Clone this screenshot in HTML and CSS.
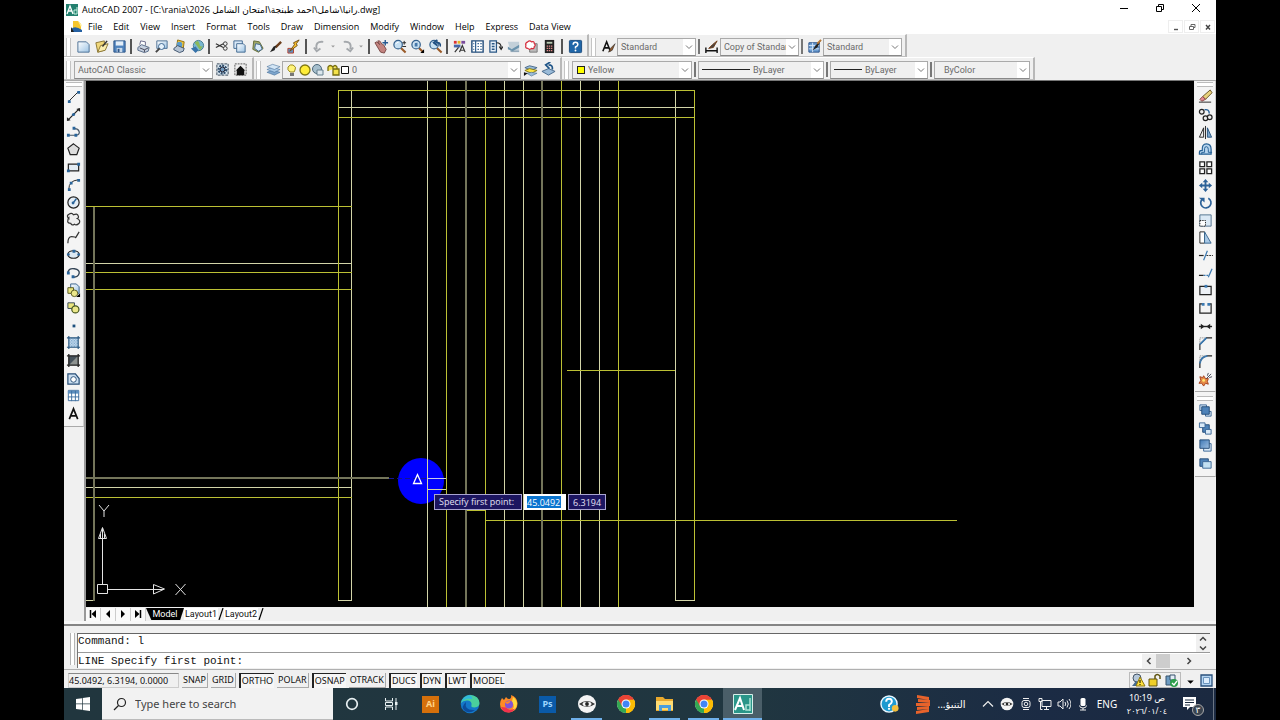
FILE: index.html
```html
<!DOCTYPE html>
<html lang="en">
<head>
<meta charset="utf-8">
<title>AutoCAD 2007</title>
<link rel="stylesheet" href="styles.css">
</head>
<body>
<svg class="sprite" aria-hidden="true">
  <defs>
    <linearGradient id="sheet" x1="0" y1="0" x2="1" y2="1"><stop offset="0" stop-color="#fff"/><stop offset="1" stop-color="#9cc3e4"/></linearGradient>
    <linearGradient id="steel" x1="0" y1="0" x2="1" y2="1"><stop offset="0" stop-color="#3f78b5"/><stop offset="1" stop-color="#9fc0e2"/></linearGradient>
    <pattern id="hatch" width="3" height="3" patternUnits="userSpaceOnUse"><path d="M0 0l3 3M3 0L0 3" stroke="#4d86b8" stroke-width=".6"/></pattern>
    <symbol id="chev" viewBox="0 0 10 10"><path d="M2 3.500l3 3 3-3" fill="none" stroke="#777"/></symbol>
    <symbol id="lens" viewBox="0 0 16 16"><path d="M9.500 9.500l5 5" stroke="#9a5a28" stroke-width="2.200"/><circle cx="6.500" cy="6" r="4.500" fill="#c5dff2" stroke="#35618e" stroke-width="1.300"/><path d="M4 5.500a3 3 0 0 1 3-2" stroke="#fff" fill="none"/></symbol>
    <symbol id="layers" viewBox="0 0 16 16"><path d="M1 11l6-2.500 8 2.500-6 3z" fill="#7ea6cd" stroke="#456e99" stroke-width=".6"/><path d="M1 8l6-2.500L15 8l-6 3z" fill="#a9c9e6" stroke="#456e99" stroke-width=".6"/><path d="M1 5l6-2.500L15 5 9 8z" fill="#d4e6f5" stroke="#456e99" stroke-width=".6"/></symbol>
    <symbol id="chrome" viewBox="0 0 20 20"><circle cx="10" cy="10" r="9" fill="#fff"/><path d="M10 10L2.200 5.500A9 9 0 0 1 17.800 5.500z" fill="#e94335"/><path d="M10 10l7.800-4.500A9 9 0 0 1 10 19z" fill="#fbbc04"/><path d="M10 10v9A9 9 0 0 1 2.200 5.500z" fill="#34a853"/><path d="M10 5.500h7.800A9 9 0 0 1 10 19l4-6.500z" fill="#fbbc04"/><path d="M10 5.500h7.800A9 9 0 0 0 2.200 5.500L6 12z" fill="#e94335"/><circle cx="10" cy="10" r="4.500" fill="#fff"/><circle cx="10" cy="10" r="3.500" fill="#4285f4"/></symbol>
    <symbol id="eye" viewBox="0 0 20 20"><circle cx="10" cy="10" r="9" fill="#f4f4f4"/><path d="M2 10Q10 4 18 10 10 16 2 10z" fill="#333"/><ellipse cx="10" cy="10" rx="4.500" ry="2.300" fill="#f4f4f4"/><circle cx="10" cy="10" r="1.900" fill="#222"/></symbol>
  </defs>
</svg>

<div class="app">
  <header class="titlebar">
    <svg class="logo" viewBox="0 0 12 12"><path d="M0 0h12v12H0z" fill="#23806f"/><path d="M1 10L4 2l3 8M2 7h4" fill="none" stroke="#fff" stroke-width="1.300"/><path d="M11 6H8v4h3M11 3v7" fill="none" stroke="#c6f0df"/></svg>
    <h1 class="title">AutoCAD 2007 - [C:\rania\<span class="path">رانيا\شامل\احمد طبنجة\امتحان الشامل 2026</span>.dwg]</h1>
    <div class="winbtns">
      <button aria-label="Minimize"><svg viewBox="0 0 10 10"><path d="M1 5.500h8" stroke="#000"/></svg></button>
      <button aria-label="Restore"><svg viewBox="0 0 10 10"><path d="M1.500 3.500h5v5h-5zM3.500 3.500v-2h5v5h-2" fill="none" stroke="#000"/></svg></button>
      <button aria-label="Close"><svg viewBox="0 0 10 10"><path d="M1 1l8 8M9 1L1 9" stroke="#000"/></svg></button>
    </div>
  </header>

  <nav class="menubar">
    <svg class="docicon" viewBox="0 0 13 13"><path d="M3 1h5l3 3v7H3z" fill="#f6c62e"/><path d="M8 1l4 4-1 2z" fill="#fff1a8"/><path d="M1 9q4-4 11 1v2H1z" fill="#2561a3"/><path d="M1 12V7l3 5z" fill="#222"/></svg>
    <button>File</button><button>Edit</button><button>View</button><button>Insert</button><button>Format</button><button>Tools</button><button>Draw</button><button>Dimension</button><button>Modify</button><button>Window</button><button>Help</button><button>Express</button><button>Data View</button>
    <div class="docbtns">
      <button aria-label="Minimize drawing"><svg viewBox="0 0 8 8"><path d="M2 6.500h4" stroke="#555" stroke-width="1.400"/></svg></button>
      <button aria-label="Restore drawing"><svg viewBox="0 0 8 8"><path d="M1.500 3.500h4v3h-4zM3 3V1.500h4v3H6" fill="none" stroke="#666"/></svg></button>
      <button aria-label="Close drawing"><svg viewBox="0 0 8 8"><path d="M2 2l4 4.500M6 2L2 6.500" stroke="#444" stroke-width="1.400"/></svg></button>
    </div>
  </nav>

  <div class="toolrow">
    <div class="toolbar">
      <i class="grip"></i>
      <button aria-label="New"><svg viewBox="0 0 16 16"><path d="M2 3h9l3 3v8H2z" fill="url(#sheet)" stroke="#4b6f94"/></svg></button>
      <button aria-label="Open"><svg viewBox="0 0 16 16"><path d="M2 4l9-2v10l-7 2z" fill="#f0d77a" stroke="#8a7430"/><path d="M4 14l3-7 8-2-3 7z" fill="#fbeeb0" stroke="#8a7430"/><path d="M9 8l5-6" stroke="#333" stroke-width="1.500"/></svg></button>
      <button aria-label="Save"><svg viewBox="0 0 16 16"><path d="M2 2h12v12H2z" fill="#4f83bd" stroke="#2d5486"/><path d="M4 2.500h8V7H4z" fill="#e4eef8"/><path d="M5 9.500h6V14H5z" fill="#c9d9ea"/><path d="M6 10.500h2V14H6z" fill="#2d5486"/></svg></button>
      <i class="sep"></i>
      <button aria-label="Plot"><svg viewBox="0 0 16 16"><path d="M4 6l1-4 5 1 0 4" fill="#fff" stroke="#668"/><path d="M2 9l4-3 8 3-1 4-4 1.500L2 12z" fill="#c6d0df" stroke="#566b88"/><path d="M4 9.500l5 2 4-2M9 11.500V14" fill="none" stroke="#445"/></svg></button>
      <button aria-label="Plot preview"><svg viewBox="0 0 16 16"><path d="M3 2h11v8H3z" fill="url(#sheet)" stroke="#4b6f94"/><circle cx="8" cy="8" r="3.200" fill="#e5f2fc" stroke="#35618e"/><path d="M6 10l-4 4" stroke="#444" stroke-width="2"/></svg></button>
      <button aria-label="Publish"><svg viewBox="0 0 16 16"><path d="M6 1l7 2-1 7-7-2z" fill="#f2c533" stroke="#916f12"/><circle cx="8" cy="6" r="3" fill="#5b9bcd"/><path d="M2 10l4-3 7 3-1 3-4 1.500-6-3z" fill="#b6c4d4" stroke="#3c516c"/></svg></button>
      <button aria-label="3D DWF"><svg viewBox="0 0 16 16"><circle cx="9" cy="7" r="5.500" fill="#78b7d0" stroke="#437a91"/><path d="M5 4q4-4 5 1t4 2l-3 5z" fill="#8cb95b"/><path d="M1 10l5-2 3 4-3 3z" fill="#3873aa"/></svg></button>
      <i class="sep"></i>
      <button aria-label="Cut"><svg viewBox="0 0 16 16"><path d="M2 5l8 4M2 9l8-4" stroke="#333" stroke-width="1.300"/><circle cx="12" cy="5" r="2" fill="none" stroke="#333"/><circle cx="12" cy="10" r="2" fill="none" stroke="#333"/></svg></button>
      <button aria-label="Copy"><svg viewBox="0 0 16 16"><path d="M2 2h9v8H2z" fill="#d8e8f7" stroke="#3f6790"/><path d="M5 5h7l2 2v7H5z" fill="url(#sheet)" stroke="#3f6790"/></svg></button>
      <button aria-label="Paste"><svg viewBox="0 0 16 16"><path d="M4 2l6 1 4 7-5 4-6-3z" fill="#a0a867" stroke="#626b36"/><path d="M6 5l5 1 2 5-4 2-4-3z" fill="#d9ebfa" stroke="#436b94"/></svg></button>
      <button aria-label="Match properties"><svg viewBox="0 0 16 16"><path d="M14 3L8 9" stroke="#6b3d1b" stroke-width="2.500"/><path d="M9 7L7 12l-5 2 4-6z" fill="#222"/></svg></button>
      <button aria-label="Block editor"><svg viewBox="0 0 16 16"><path d="M2 10h6v5H2z" fill="#638fc0" stroke="#b4402b"/><path d="M14 1L8 4l1 2-5 7 8-6-1-2z" fill="#ffc52d" stroke="#6c4910"/></svg></button>
      <i class="sep wide"></i>
      <button aria-label="Undo"><svg viewBox="0 0 16 16"><path d="M12 3Q3 2 5 11M2 9l3 4 4-3" fill="none" stroke="#a4a8ac" stroke-width="2"/></svg></button>
      <button class="drop" aria-label="Undo list"><svg viewBox="0 0 10 16"><path d="M3 7h4L5 9z" fill="#999"/></svg></button>
      <button aria-label="Redo"><svg viewBox="0 0 16 16"><path d="M4 3q9-1 7 8M7 10l4 3 3-4" fill="none" stroke="#a4a8ac" stroke-width="2"/></svg></button>
      <button class="drop" aria-label="Redo list"><svg viewBox="0 0 10 16"><path d="M3 7h4L5 9z" fill="#999"/></svg></button>
      <i class="sep"></i>
      <button aria-label="Pan"><svg viewBox="0 0 16 16"><path d="M1 4l2-1 3 3-2-4 2 0 3 4 1 0 3 5-2 4-4-1z" fill="#c3837f" stroke="#7a4946"/><path d="M12 1v6M9 4h6" stroke="#285a91" stroke-width="1.500"/></svg></button>
      <button aria-label="Zoom realtime"><svg viewBox="0 0 16 16"><use href="#lens"/><path d="M11 4h4M13 2v4M11 8h4" stroke="#222"/></svg></button>
      <button aria-label="Zoom window"><svg viewBox="0 0 16 16"><use href="#lens"/><path d="M5 4h3v4H5z" fill="#4577aa"/><path d="M15 11v4h-4z" fill="#000"/></svg></button>
      <button aria-label="Zoom previous"><svg viewBox="0 0 16 16"><use href="#lens"/><path d="M13 8q1-5-5-4M10 1L6 4l4 3" fill="none" stroke="#204f82" stroke-width="1.800"/></svg></button>
      <i class="sep"></i>
      <button aria-label="Properties"><svg viewBox="0 0 16 16"><path d="M2 2h3v3H2z" fill="#d33"/><path d="M6 2h3v3H6z" fill="#e6b422"/><path d="M10 2h4v3h-4z" fill="#7a4b9b"/><path d="M2 6h7v3H2z" fill="#46a"/><path d="M3 14l4-5M8 14l3-7 3 7M9 12h4" fill="none" stroke="#333" stroke-width="1.300"/></svg></button>
      <button aria-label="DesignCenter"><svg viewBox="0 0 16 16"><path d="M2 2h12v12H2z" fill="#fff" stroke="#244e7b" stroke-width="1.500"/><path d="M6 2v12M8 5h1.500M11 5h1.500M8 8h1.500M11 8h1.500M8 11h1.500M11 11h1.500M3.500 5h1M3.500 8h1M3.500 11h1" stroke="#33618f" stroke-width="1.300"/></svg></button>
      <button aria-label="Tool palettes"><svg viewBox="0 0 16 16"><path d="M2 2h7v12H2z" fill="#e7f0f9" stroke="#2a5785" stroke-width="1.300"/><path d="M4 5h3M4 8h3M4 11h3" stroke="#2a5785" stroke-width="1.500"/><path d="M9 4q5 0 5 5M12 8l2 3 2-3" fill="none" stroke="#222" stroke-width="1.300"/></svg></button>
      <button aria-label="Sheet set"><svg viewBox="0 0 16 16"><path d="M2 3h12v11H5z" fill="#c3d0d9"/><path d="M2 8l4 3 8-5v3l-7 4-5-2z" fill="#6b93ad"/><path d="M5 13h9" stroke="#7a93a5"/></svg></button>
      <button aria-label="Markup"><svg viewBox="0 0 16 16"><path d="M6 5h8v9H6z" fill="#bbb" stroke="#777"/><path d="M4 3q2-2 4 0 3-1 3 2 2 2 0 3 0 3-3 2-2 2-4 0-3 0-2-3-1-3 2-4z" fill="#fff" stroke="#d62d3c" stroke-width="1.300"/></svg></button>
      <button aria-label="Calculator"><svg viewBox="0 0 16 16"><path d="M3 1h10v14H3z" fill="#222"/><path d="M5 3h6v2H5z" fill="#b9cab3"/><path d="M5 7.500h6M5 10h6M5 12.500h6" stroke="#d88" stroke-width="1.300" stroke-dasharray="1.500 .8"/></svg></button>
      <i class="sep wide"></i>
      <button aria-label="Help"><svg viewBox="0 0 16 16"><rect x="1.500" y="1.500" width="13" height="13" rx="1" fill="#1f66a8" stroke="#174a7d"/><path d="M5.500 6q0-2.500 2.500-2.500T10.500 6q0 1.300-2.500 2.500v1.500" fill="none" stroke="#fff" stroke-width="1.600"/><circle cx="8" cy="12.200" r="1" fill="#fff"/></svg></button>
    </div>
    <div class="toolbar">
      <i class="grip"></i>
      <button aria-label="Text style"><svg viewBox="0 0 16 16"><path d="M2 13L6 3l4 10M3.500 9.500h5" fill="none" stroke="#111" stroke-width="1.700"/><path d="M15 5l-5 5-2 4 4-2z" fill="#8d572c" stroke="#222" stroke-width=".6"/></svg></button>
      <label class="combo w79"><select aria-label="Text style"><option>Standard</option></select><svg><use href="#chev"/></svg></label>
      <i class="sep thin"></i>
      <button aria-label="Dimension style"><svg viewBox="0 0 16 16"><path d="M2 9v6M14 9v6M2 12.500h12" stroke="#111" stroke-width="1.500"/><path d="M14 2L9 6 5 10l5-1z" fill="#444" stroke="#733d17"/></svg></button>
      <label class="combo w79"><select aria-label="Dimension style"><option>Copy of Standar</option></select><svg><use href="#chev"/></svg></label>
      <i class="sep thin"></i>
      <button aria-label="Table style"><svg viewBox="0 0 16 16"><path d="M2 4h11v10H2z" fill="#6d9ed2" stroke="#244e88"/><path d="M2 7h11M2 10.500h11M6 4v10" stroke="#d7e8fa"/><path d="M15 1L9 7l-3 5 5-3z" fill="#222"/><path d="M15 1l-4 4" stroke="#b87835" stroke-width="2"/></svg></button>
      <label class="combo w79"><select aria-label="Table style"><option>Standard</option></select><svg><use href="#chev"/></svg></label>
    </div>
  </div>

  <div class="toolrow">
    <div class="toolbar">
      <i class="grip"></i>
      <label class="combo w139"><select aria-label="Workspace"><option>AutoCAD Classic</option></select><svg><use href="#chev"/></svg></label>
      <button aria-label="Workspace settings"><svg viewBox="0 0 16 16"><path d="M2 2h12v12H2z" fill="#dce8f2" stroke="#345" stroke-dasharray="3 1"/><circle cx="8" cy="8" r="4" fill="none" stroke="#2c4b6a" stroke-width="2.500" stroke-dasharray="2 1"/><circle cx="8" cy="8" r="2.500" fill="#7199bd" stroke="#223"/></svg></button>
      <button aria-label="My workspace"><svg viewBox="0 0 16 16"><path d="M2 2h12v12H2z" fill="#eee" stroke="#555" stroke-dasharray="2 1"/><path d="M3 9l5-5 5 5h-1v5H4V9z" fill="#111"/></svg></button>
    </div>
    <div class="toolbar">
      <i class="grip"></i>
      <button aria-label="Layer manager"><svg><use href="#layers"/></svg></button>
      <label class="combo w239">
        <svg class="strip" viewBox="0 0 64 14"><path d="M5 9Q2 7 3 4q2-3 5-2 4 2 2 5L9 9z" fill="#fff47a" stroke="#9b8a20"/><path d="M5 10h4v3H5z" fill="#777"/><circle cx="20" cy="7" r="5" fill="#ffed38" stroke="#807814" stroke-width="1.300"/><circle cx="32" cy="6" r="4.500" fill="#a6bfcd" stroke="#4c687a"/><path d="M32 7h6v5h-6z" fill="#dce7ee" stroke="#67808f"/><path d="M43 8V4q2-3 5 0v2M48 12V6h6v6zM52 6V4q-2-3-4 0" fill="#f4e24b" stroke="#776d10" stroke-width="1.300"/><path d="M56.500 3.500h7v7h-7z" fill="#fff" stroke="#111"/></svg>
        <select aria-label="Layer"><option>0</option></select><svg><use href="#chev"/></svg></label>
      <button aria-label="Make layer current"><svg viewBox="0 0 16 16"><path d="M2 6l5-2 8 2-6 3z" fill="#9abbd8" stroke="#46698b"/><path d="M2 9l5-2 8 2-6 3z" fill="#ffe642" stroke="#807515"/><path d="M4 12l5-1 6 1-6 3z" fill="#9abbd8" stroke="#46698b" stroke-width=".6"/><path d="M1 15v-4l4 1z" fill="#111"/></svg></button>
      <button aria-label="Layer previous"><svg viewBox="0 0 16 16"><path d="M1 10l7-3 7 3-7 4z" fill="#9abbd8" stroke="#46698b"/><path d="M12 8q1-5-4-5M10 0L5 3l4 4" fill="none" stroke="#1e5487" stroke-width="1.800"/></svg></button>
    </div>
    <div class="toolbar">
      <i class="grip"></i>
      <label class="combo w120"><i class="swatch"></i><select aria-label="Color"><option>Yellow</option></select><svg><use href="#chev"/></svg></label>
      <i class="sep thin"></i>
      <label class="combo w126"><i class="line l48"></i><select aria-label="Linetype"><option>ByLayer</option></select><svg><use href="#chev"/></svg></label>
      <i class="sep thin"></i>
      <label class="combo w98"><i class="line l28"></i><select aria-label="Lineweight"><option>ByLayer</option></select><svg><use href="#chev"/></svg></label>
      <i class="sep thin"></i>
      <label class="combo w96 inset"><select aria-label="Plot style"><option>ByColor</option></select><svg><use href="#chev"/></svg></label>
    </div>
  </div>

  <main class="work">
    <aside class="side">
      <div class="vbar draw">
        <i class="hgrip"></i>
        <button aria-label="Line"><svg viewBox="0 0 16 16"><path d="M3 13L13 3" stroke="#222"/><path d="M2 12h3v3H2zM12 2h3v3h-3z" fill="#2a659b"/></svg></button>
        <button aria-label="Construction line"><svg viewBox="0 0 16 16"><path d="M2 14L14 2" stroke="#222" stroke-width="1.300"/><path d="M1 15v-4l4 3zM15 1v4l-4-3z" fill="#222"/><circle cx="8" cy="8" r="1.700" fill="#2a659b"/></svg></button>
        <button aria-label="Polyline"><svg viewBox="0 0 16 16"><path d="M2 12h9q4-1 3-4t-5-3" fill="none" stroke="#456" stroke-width="1.300"/><path d="M1 10.500h3v3H1zM9 10.500h3v3H9zM7 3h3v3H7z" fill="#2a659b"/></svg></button>
        <button aria-label="Polygon"><svg viewBox="0 0 16 16"><path d="M8 2l6 4.500-2.500 7h-7L2 6.500z" fill="#ddd" stroke="#222" stroke-width="1.300"/></svg></button>
        <button aria-label="Rectangle"><svg viewBox="0 0 16 16"><path d="M2.500 4.500h11v7h-11z" fill="#e4edf5" stroke="#222" stroke-width="1.300"/><path d="M1 10h3v3H1zM12 3h3v3h-3z" fill="#2a659b"/></svg></button>
        <button aria-label="Arc"><svg viewBox="0 0 16 16"><path d="M3 13Q3 4 13 3" fill="none" stroke="#222"/><path d="M2 12h3v3H2zM12 2h3v3h-3zM4 5h3v3H4z" fill="#2a659b"/></svg></button>
        <button aria-label="Circle"><svg viewBox="0 0 16 16"><circle cx="8" cy="8" r="6" fill="#e4edf5" stroke="#222" stroke-width="1.300"/><path d="M8 8l3-4" stroke="#2a659b" stroke-width="1.500"/><circle cx="7.500" cy="8.500" r="1.500" fill="#2a659b"/></svg></button>
        <button aria-label="Revision cloud"><svg viewBox="0 0 16 16"><path d="M3 7Q0 4 3 2.500 6 0 8 3q4-2 5 1 1 2-1 3 4 2 2 5-3 3-5 1-3 2-4-1-4 0-3-3 0-2 1-3z" fill="#eee" stroke="#333" stroke-width="1.300"/></svg></button>
        <button aria-label="Spline"><svg viewBox="0 0 16 16"><path d="M2 14q0-7 4-7t4 1 4-6" fill="none" stroke="#333" stroke-width="1.300"/></svg></button>
        <button aria-label="Ellipse"><svg viewBox="0 0 16 16"><ellipse cx="8" cy="8" rx="6" ry="4" fill="#dce8f2" stroke="#222" stroke-width="1.300"/><path d="M7 3h3v3H7zM1 7h3v2H1zM12 7h3v2h-3z" fill="#2a659b"/></svg></button>
        <button aria-label="Ellipse arc"><svg viewBox="0 0 16 16"><path d="M2 8q1-5 7-4t5 5-6 4" fill="none" stroke="#345" stroke-width="1.500"/><path d="M1 7h3v3H1zM6 11h3v3H6z" fill="#2a659b"/></svg></button>
        <button aria-label="Insert block"><svg viewBox="0 0 16 16"><path d="M5 1h6l3 3v7H5z" fill="url(#sheet)" stroke="#345f89"/><path d="M2 5h6v6H2z" fill="#e9e47d" stroke="#56571f"/><circle cx="9" cy="11" r="3.500" fill="#ece88a" stroke="#56571f"/><path d="M15 11v4h-4z"/></svg></button>
        <button aria-label="Make block"><svg viewBox="0 0 16 16"><path d="M2 3h7v6H2z" fill="#e9e47d" stroke="#345"/><circle cx="10" cy="10" r="3.800" fill="#ece88a" stroke="#44551f" stroke-width="1.300"/></svg></button>
        <button aria-label="Point"><svg viewBox="0 0 16 16"><path d="M7 7h3v3H7z" fill="#1e507e"/></svg></button>
        <button aria-label="Hatch"><svg viewBox="0 0 16 16"><path d="M3 3h10v10H3z" fill="#dcebf8"/><path d="M3 3h10v10H3z" fill="url(#hatch)"/><path d="M1 3h14M1 13h14M3 1v14M13 1v14" stroke="#27557f" stroke-width="1.200"/></svg></button>
        <button aria-label="Gradient"><svg viewBox="0 0 16 16"><path d="M3 3h10v10H3z" fill="#46525c"/><path d="M13 3v10H3z" fill="#8d9290"/><path d="M1 3h14M1 13h14M3 1v14M13 1v14" stroke="#222" stroke-width="1.400"/></svg></button>
        <button aria-label="Region"><svg viewBox="0 0 16 16"><path d="M2 3h8l4 5v6H2z" fill="#cbdff1" stroke="#284f77" stroke-width="1.300"/><circle cx="8" cy="9" r="3" fill="#fff" stroke="#284f77"/></svg></button>
        <button aria-label="Table"><svg viewBox="0 0 16 16"><path d="M2.500 2.500h11v11h-11z" fill="#fff" stroke="#3e6fa0"/><path d="M2 3h12v3H2z" fill="#5d8fbf"/><path d="M2 9.500h12M6 3v11M10 3v11" stroke="#3e6fa0"/></svg></button>
        <button aria-label="Multiline text"><svg viewBox="0 0 16 16"><path d="M3.500 14L8 3l4.500 11M5 10.500h6" fill="none" stroke="#111" stroke-width="1.800"/></svg></button>
      </div>
    </aside>

    <section class="drawing">
      <div class="canvas">
        <svg class="plan" aria-label="Drawing">
          <g transform="translate(-86 -81)" shape-rendering="crispEdges" fill="none">
            <circle cx="421" cy="481" r="23" fill="#00f" shape-rendering="auto"/>
            <g stroke="#d2d4a8">
              <path d="M427.500 81v526M504.500 81v526M523.500 81v526M580.500 81v526M599.500 81v526"/>
              <path d="M351.500 91v509M675.500 91v509M338 107.500h357M86 263.500h266M86 487.500h266M427 489.500h19M338 600.500h14M675 600.500h20M86 600.500h8"/>
            </g>
            <path d="M427 478.500h19" stroke="#c9cbe6"/>
            <g stroke="#bcc034">
              <path d="M446.500 81v526M485.500 81v526M561.500 81v526M618.500 81v526"/>
              <path d="M338.500 90v510M694.500 90v510M338 90.500h357M338 117.500h357M86 206.500h266M86 272.500h266M86 289.500h266M86 497.500h266M567 370.500h108M485 520.500h472M466 510.500h19"/>
            </g>
            <g stroke="#74755a" stroke-width="2"><path d="M466 81v526M542 81v526M94 207v394M86 478h303"/></g>
            <path d="M389 478.500h38" stroke="#141490" stroke-dasharray="5 3"/>
            <path d="M417.500 474.500l-4 9h8z" stroke="#fff" stroke-width="1.300" shape-rendering="auto"/>
            <g stroke="#e4e4e4" shape-rendering="auto"><path d="M97.500 584.500h10v9h-10zM102.500 584v-45M107 589.500h46M98.500 538.500l4-11 4 11zM100.500 538v-4M102.500 538v-10M104.500 538v-4M153.500 584.500l11 4.500-11 5zM153 589.500h10"/><path d="M99 505l5 6 5-6M104 511v6M175.500 584l10 11M185.500 584l-10 11"/></g>
          </g>
        </svg>
        <div class="dyn">
          <label class="tip" for="px">Specify first point:</label>
          <input id="px" class="px" value="45.0492">
          <input class="py" aria-label="Y coordinate" value="6.3194">
        </div>
      </div>
      <div class="tabs">
        <button class="nav" aria-label="First"><svg viewBox="0 0 14 12"><path d="M4.500 2v8" stroke="#000" stroke-width="1.500"/><path d="M10 2v8L5.500 6z"/></svg></button>
        <button class="nav" aria-label="Previous"><svg viewBox="0 0 14 12"><path d="M9 2v8L5 6z"/></svg></button>
        <button class="nav" aria-label="Next"><svg viewBox="0 0 14 12"><path d="M5 2v8l4-4z"/></svg></button>
        <button class="nav" aria-label="Last"><svg viewBox="0 0 14 12"><path d="M9.500 2v8" stroke="#000" stroke-width="1.500"/><path d="M4 2v8l4.500-4z"/></svg></button>
        <button class="tab active">Model</button>
        <button class="tab">Layout1</button>
        <svg class="slash" viewBox="0 0 6 12"><path d="M1 12L5 0" stroke="#000" stroke-width="1.200"/></svg>
        <button class="tab">Layout2</button>
        <svg class="slash" viewBox="0 0 6 12"><path d="M1 12L5 0" stroke="#000" stroke-width="1.200"/></svg>
      </div>
    </section>

    <aside class="side right">
      <div class="vbar modify">
        <i class="hgrip"></i>
        <button aria-label="Erase"><svg viewBox="0 0 16 16"><path d="M13 1L5 8l3 3 7-7z" fill="#e9d27c" stroke="#665322"/><path d="M5 8l-3 3 2 2 4-2z" fill="#e58c92" stroke="#844"/><path d="M1 14h13" stroke="#222"/></svg></button>
        <button aria-label="Copy object"><svg viewBox="0 0 16 16"><g fill="#eee" stroke="#222" stroke-width="1.300"><circle cx="4" cy="5" r="2.500"/><circle cx="8" cy="12" r="2.500"/><circle cx="12.500" cy="11" r="2.500"/></g><path d="M7 3q5-1 5 4" fill="none" stroke="#27629a" stroke-width="1.500"/></svg></button>
        <button aria-label="Mirror"><svg viewBox="0 0 16 16"><path d="M6 3v10H1.500z" fill="#eee" stroke="#222"/><path d="M10 3v10h4.500z" fill="#7ba6cd" stroke="#25537f"/><path d="M8 1v14" stroke="#222"/></svg></button>
        <button aria-label="Offset"><svg viewBox="0 0 16 16"><path d="M1.500 13v-2q0-2 3-2Q4 2 9 2t5 6v5z" fill="#b7d5ee" stroke="#225e93" stroke-width="1.300"/><path d="M4 13v-2h3V7q0-2 2-2t2 3v3h4" fill="none" stroke="#225e93"/></svg></button>
        <button aria-label="Array"><svg viewBox="0 0 16 16"><path d="M2 2h5v5H2zM9.500 2h5v5h-5zM2 9.500h5v5H2zM9.500 9.500h5v5h-5z" fill="#fff" stroke="#222" stroke-width="1.400"/></svg></button>
        <button aria-label="Move"><svg viewBox="0 0 16 16"><path d="M8 1l3 3.500H9V7h2.500V5L15 8l-3.500 3V9H9v2.500h2L8 15l-3-3.500h2V9H4.500v2L1 8l3.500-3v2H7V4.500H5z" fill="#2d6298"/></svg></button>
        <button aria-label="Rotate"><svg viewBox="0 0 16 16"><path d="M5 4a5.500 5.500 0 1 0 6-.500" fill="none" stroke="#2d6298" stroke-width="1.800"/><path d="M1 3h6v5z" fill="#2d6298"/></svg></button>
        <button aria-label="Scale"><svg viewBox="0 0 16 16"><path d="M2 2h12v12H2z" fill="#dbe9f5" stroke="#50718e"/><path d="M2 8h6v6H2z" fill="#fff" stroke="#222" stroke-dasharray="1.500 1"/></svg></button>
        <button aria-label="Stretch"><svg viewBox="0 0 16 16"><path d="M2 2h5v12H2z" fill="#fff" stroke="#222"/><path d="M7 2l7 12H7z" fill="#a9c9e6" stroke="#38658f"/></svg></button>
        <button aria-label="Trim"><svg viewBox="0 0 16 16"><path d="M1 8h5" stroke="#222" stroke-width="1.300"/><path d="M9 8h7" stroke="#222" stroke-dasharray="2 1"/><path d="M10 3L6 13" stroke="#3b79b1" stroke-width="1.300"/></svg></button>
        <button aria-label="Extend"><svg viewBox="0 0 16 16"><path d="M1 10h5" stroke="#222" stroke-width="1.300"/><path d="M6 10h6" stroke="#3b79b1" stroke-width="1.300" stroke-dasharray="2 1"/><path d="M15 3l-4 9" stroke="#3b79b1" stroke-width="1.300"/></svg></button>
        <button aria-label="Break at point"><svg viewBox="0 0 16 16"><path d="M2 3.500h12v9H2z" fill="#edf1f6" stroke="#222" stroke-width="1.300"/><path d="M7 2h3v3H7z" fill="#3b79b1"/></svg></button>
        <button aria-label="Break"><svg viewBox="0 0 16 16"><path d="M5 3H2v10h12V3h-3" fill="none" stroke="#222" stroke-width="1.300"/><path d="M4 2h3v3H4zM10 2h3v3h-3z" fill="#3b79b1"/></svg></button>
        <button aria-label="Join"><svg viewBox="0 0 16 16"><path d="M1 8h14" stroke="#222" stroke-width="1.500"/><path d="M3 5l4 3-4 3zM13 5L9 8l4 3z" fill="#222"/></svg></button>
        <button aria-label="Chamfer"><svg viewBox="0 0 16 16"><path d="M2 15V9l7-7h6" fill="none" stroke="#222" stroke-width="1.200"/><path d="M2 9l7-7" stroke="#3b79b1" stroke-width="1.800"/><path d="M2 8V2h6" fill="none" stroke="#777" stroke-dasharray="1 1"/></svg></button>
        <button aria-label="Fillet"><svg viewBox="0 0 16 16"><path d="M2 15V10q1-7 8-8h5" fill="none" stroke="#222" stroke-width="1.300"/><path d="M2 10q1-7 8-8" fill="none" stroke="#3b79b1" stroke-width="2"/><path d="M2 8V2h6" fill="none" stroke="#777" stroke-dasharray="1 1"/></svg></button>
        <button aria-label="Explode"><svg viewBox="0 0 16 16"><path d="M2 5l3 1 1-2 2 3 3 0-1 3 1 3-3-1-2 3-2-3-3 0 2-3z" fill="#e68a48" stroke="#a5401c"/><circle cx="6" cy="9" r="1.500" fill="#ffe672"/><path d="M9 7l5-5M12 6l3-1M10 4l1-3" stroke="#445"/></svg></button>
      </div>
      <div class="vbar order">
        <i class="hgrip"></i>
        <button aria-label="Bring to front"><svg viewBox="0 0 16 16"><path d="M2 2h7v6H2zM8 9h6v5H8z" fill="#d9e9f7" stroke="#3c6896"/><path d="M4 4h8v8H4z" fill="#4f83b9" stroke="#254d79"/></svg></button>
        <button aria-label="Send to back"><svg viewBox="0 0 16 16"><path d="M5 4h7v8H5z" fill="#4f83b9" stroke="#254d79"/><path d="M1.500 2h6v5h-6zM8 9h6v5H8z" fill="#d9e9f7" stroke="#3c6896"/></svg></button>
        <button aria-label="Bring above"><svg viewBox="0 0 16 16"><path d="M6 6h8v8H6z" fill="#d9e9f7" stroke="#3c6896"/><path d="M2 2h10v9H2z" fill="url(#steel)" stroke="#254d79"/></svg></button>
        <button aria-label="Send under"><svg viewBox="0 0 16 16"><path d="M2 3h9v8H2z" fill="#4f83b9" stroke="#254d79"/><path d="M5 6h9v7H5z" fill="#c3e0f2" stroke="#3c6896"/></svg></button>
      </div>
    </aside>
  </main>

  <div class="divider"></div>

  <section class="command">
    <i class="cgrip"></i>
    <div class="cmdbox">
      <div class="history"><output>Command: l</output>
        <div class="vscroll"><button aria-label="Scroll up"><svg viewBox="0 0 10 8"><path d="M2 5.500l3-3 3 3" fill="none" stroke="#444" stroke-width="1.500"/></svg></button><button aria-label="Scroll down"><svg viewBox="0 0 10 8"><path d="M2 2.500l3 3 3-3" fill="none" stroke="#444" stroke-width="1.500"/></svg></button></div>
      </div>
      <div class="prompt"><label for="cmd">LINE Specify first point:</label><input id="cmd">
        <div class="hscroll"><button aria-label="Scroll left"><svg viewBox="0 0 8 10"><path d="M5.500 2l-3 3 3 3" fill="none" stroke="#444" stroke-width="1.500"/></svg></button><i class="thumb"></i><button aria-label="Scroll right"><svg viewBox="0 0 8 10"><path d="M2.500 2l3 3-3 3" fill="none" stroke="#444" stroke-width="1.500"/></svg></button></div>
      </div>
    </div>
  </section>

  <div class="status">
    <output class="coords">45.0492, 6.3194, 0.0000</output>
    <button>SNAP</button><button>GRID</button><button class="on">ORTHO</button><button>POLAR</button><button class="on">OSNAP</button><button>OTRACK</button><button class="on">DUCS</button><button class="on">DYN</button><button class="on">LWT</button><button class="on">MODEL</button>
    <div class="tray">
      <svg viewBox="0 0 50 14"><circle cx="7" cy="5" r="4" fill="#b6c8da" stroke="#456"/><path d="M2 13l4-5 4 5z" fill="#456b91"/><path d="M10 4l5 9H6z" fill="#ffe13d" stroke="#8b7510"/><path d="M10 7v3M10 11v1" stroke="#000"/><path d="M19 6h8v7h-8z" fill="#f0cf28" stroke="#5e5310"/><path d="M25 6V3q2-3 5 0v3" fill="none" stroke="#5e5310" stroke-width="1.500"/><path d="M36 3h5v9h-5z" fill="#6d9bc1" stroke="#36536d"/><path d="M40 2h5v5h-5z" fill="#e4edf5" stroke="#36536d"/><circle cx="44" cy="10" r="4" fill="#2d9e4a"/><path d="M42 10l2 2 3-4" stroke="#fff" stroke-width="1.300" fill="none"/></svg>
    </div>
    <button class="flat" aria-label="Tray menu"><svg viewBox="0 0 12 12"><path d="M3 6h6L6 9z"/></svg></button>
    <button class="flat" aria-label="Clean screen"><svg viewBox="0 0 13 13"><path d="M1 1h11v11H1z" fill="#b5d5f2" stroke="#284f7b" stroke-width="1.300"/><path d="M3.500 3.500h6v6h-6z" fill="#dcecfb" stroke="#6b94bd"/></svg></button>
  </div>

  <footer class="taskbar">
    <button class="start" aria-label="Start"><svg viewBox="0 0 14 14"><path d="M0 2l6-.800v5.300H0zM6.700 1.100L14 0v6.500H6.700zM0 7.300h6v5.400L0 12zM6.700 7.300H14V14l-7.300-1.100z" fill="#fff"/></svg></button>
    <label class="search"><svg viewBox="0 0 14 14"><circle cx="8.500" cy="5.500" r="4" fill="none" stroke="#222" stroke-width="1.200"/><path d="M5.500 8.500L1 13" stroke="#222" stroke-width="1.300"/></svg><input placeholder="Type here to search" aria-label="Search"></label>
    <button class="app-btn" aria-label="Cortana"><svg viewBox="0 0 20 20"><circle cx="9" cy="10" r="5.300" fill="none" stroke="#e8f0f2" stroke-width="1.700"/></svg></button>
    <button class="app-btn" aria-label="Task view"><svg viewBox="0 0 20 20"><path d="M3.500 4v3h7V4M3.500 16v-3h7v3M3.500 8.500h7v3h-7zM14 4v12" fill="none" stroke="#e8f0f2"/><path d="M13 8h2.500v3H13z" fill="#e8f0f2"/></svg></button>
    <button class="app-btn" aria-label="Illustrator"><span class="tile ai">Ai</span></button>
    <button class="app-btn" aria-label="Edge"><svg viewBox="0 0 20 20"><circle cx="10" cy="10" r="9.300" fill="#1478c9"/><path d="M1 9Q3 1 11 1q8 1 8.500 8 0 4-5 4.500-4 0-3-2.500Q12 7 8 6.500 3 6 1 9z" fill="#4bd09c"/><path d="M1 9Q3 3 9 1.200q4 1 3 4Q6 3 1 9z" fill="#30b8e0"/><path d="M6 8q-2 9 9 8-5 4-10 1-5-4 1-9z" fill="#0c4c9b"/></svg></button>
    <button class="app-btn" aria-label="Firefox"><svg viewBox="0 0 20 20"><path d="M3 4l2 2 2-3 2 2q4 0 3-4 6 2 6.500 8 .500 8-8.500 9.500Q1 18 1 10q0-3 2-6z" fill="#ff8a25"/><path d="M14 3q4 3 4 7-1 6-6 8 5-6 1-10z" fill="#ffdb3f"/><path d="M2 13q2 6 8 5.500 4 0 6-4-6 3-9-1z" fill="#f2324e"/><circle cx="10" cy="10.500" r="4" fill="#8254d6"/><path d="M6 8l5-1q1 2-3 3z" fill="#ff8a25"/></svg></button>
    <button class="app-btn" aria-label="Photoshop"><span class="tile ps">Ps</span></button>
    <button class="app-btn open" aria-label="Viewer"><svg><use href="#eye"/></svg></button>
    <button class="app-btn" aria-label="Chrome"><svg><use href="#chrome"/></svg></button>
    <button class="app-btn open" aria-label="File Explorer"><svg viewBox="0 0 20 20"><path d="M1 3h7l2 2h8v12H1z" fill="#e9a92d"/><path d="M1 7h17v9H1z" fill="#ffdc73"/><path d="M4 17v-6h12v6h-3v-3H7v3z" fill="#4a9ede"/></svg></button>
    <button class="app-btn open" aria-label="Chrome window"><svg><use href="#chrome"/></svg></button>
    <button class="app-btn open current" aria-label="AutoCAD"><svg viewBox="0 0 20 20"><path d="M.500.500h19v19H.500z" fill="#2a9689" stroke="#d6efe9"/><path d="M2 16L7 4l4 12M4 12h6" fill="none" stroke="#fff" stroke-width="2"/><path d="M17 11h-4v5h4M17 4v13" fill="none" stroke="#a9e4d5" stroke-width="1.500"/></svg></button>
    <div class="systray">
      <button class="big" aria-label="Help"><svg viewBox="0 0 20 20"><circle cx="9.500" cy="9.500" r="8.500" fill="#1e9ad0" stroke="#e9f7ff" stroke-width="1.500"/><path d="M6.500 7q0-3 3-3t3 3q0 1.500-3 3.500v2" fill="none" stroke="#fff" stroke-width="2"/><circle cx="9.500" cy="14.500" r="1.200" fill="#fff"/><circle cx="16" cy="14" r="3.500" fill="#f3bf3b"/></svg></button>
      <button class="news"><svg viewBox="0 0 18 20"><path d="M3 1l12 2v3L3 4zM4 5l12 1v3L4 8zM2 9h14v3L2 12zM3 13l12-1v3L3 16zM2 17l13-2v3L2 20z" fill="#e8632b"/></svg><span dir="rtl">التنبؤ...</span></button>
      <button aria-label="Hidden icons"><svg viewBox="0 0 14 14"><path d="M2 9.500l5-5 5 5" fill="none" stroke="#eee" stroke-width="1.200"/></svg></button>
      <button aria-label="Viewer"><svg><use href="#eye"/></svg></button>
      <button aria-label="Camera"><svg viewBox="0 0 14 14"><rect x="3" y="3.500" width="8" height="7" rx="2" fill="none" stroke="#eee"/><circle cx="7" cy="7" r="1.800" fill="none" stroke="#eee"/><path d="M4 1.500h6M4 12.500h6" stroke="#eee"/></svg></button>
      <button aria-label="Network"><svg viewBox="0 0 14 14"><path d="M4 3.500h9v6H4zM8.500 9.500v3M6 12.500h5M1 1.500h3v3H1zM2.500 4.500v8h2" fill="none" stroke="#eee"/></svg></button>
      <button aria-label="Volume"><svg viewBox="0 0 14 14"><path d="M1 5h2l3-3v10L3 9H1zM8 5q1.500 2 0 4M10 3.500q2.500 3.500 0 7M12 2q4 5 0 10" fill="none" stroke="#eee"/></svg></button>
      <button aria-label="Microphone"><svg viewBox="0 0 14 14"><rect x="4.500" y="1" width="5" height="8" rx="1.500" fill="#fff"/><path d="M3.500 8.500q0 2.500 3.500 2.500t3.500-2.500M7 11v2M4 13h6" fill="none" stroke="#eee"/></svg></button>
      <button class="lang">ENG</button>
      <button class="clock"><time>10:19 ص</time><time class="date">٢٠٢٦/٠١/٠٤</time></button>
      <button class="notif" aria-label="Notifications"><svg viewBox="0 0 22 20"><path d="M2 3h13v10H9l-3 3v-3H2z" fill="#fff"/><path d="M4 6h9M4 8.500h9M4 11h5" stroke="#1c2c40"/></svg><span class="badge">٣</span></button>
      <i class="peek"></i>
    </div>
  </footer>
</div>
</body>
</html>
```
FILE: styles.css
```css
* { box-sizing: border-box; }
html, body { height: 100%; }
body {
  margin: 0;
  padding: 0 5%;
  background: #000;
  font-family: "Open Sans", "Noto Sans", "DejaVu Sans", sans-serif;
  font-size: 9px;
  color: #111;
}
button, input, select { font: inherit; color: inherit; margin: 0; padding: 0; border: 0; background: none; border-radius: 0; }
button { display: flex; align-items: center; justify-content: center; white-space: nowrap; }
svg { display: block; flex: none; }
i { display: block; flex: none; }
.sprite { position: absolute; width: 0; height: 0; }
.app { display: flex; flex-direction: column; min-height: 100%; background: #f0f0f0; overflow: hidden; }

.titlebar { display: flex; align-items: center; height: 19px; background: #fff; padding-left: 2px; }
.logo { width: 12px; height: 12px; margin-right: 4px; }
.title { margin: 0; font-size: 9px; font-weight: 400; white-space: nowrap; color: #000; }
.winbtns { display: flex; align-items: center; height: 16px; align-self: flex-start; margin-left: auto; padding-right: 2px; }
.winbtns button { width: 36px; height: 16px; }
.winbtns svg { width: 10px; height: 10px; }

.menubar { display: flex; align-items: center; height: 15px; background: #fff; padding-left: 6px; }
.docicon { width: 13px; height: 13px; }
.menubar > button { padding: 0 6px 0 5px; height: 15px; color: #000; }
.docbtns { display: flex; margin-left: auto; gap: 1px; padding-right: 1px; }
.docbtns button { width: 15px; height: 13px; border: 1px solid #eee; }
.docbtns svg { width: 8px; height: 8px; }

.toolrow { display: flex; height: 23px; }
.toolbar { display: flex; align-items: center; height: 23px; padding: 2px 3px 0 2px; border-top: 1px solid #fff; border-bottom: 1px solid #c0c0c0; border-right: 2px solid #b8b8b8; }
.toolbar + .toolbar { padding-left: 2px; }
.toolbar button { width: 18px; height: 18px; }
.toolbar button svg { width: 15px; height: 15px; }
.toolbar .drop { width: 10px; }
.toolbar .drop svg { width: 10px; }
.grip { width: 5px; height: 18px; margin-right: 3px; border: solid #c4c4c4; border-width: 0 1px; background: #fff; }
.sep { width: 2px; height: 15px; margin: 0 2px; background: #555; }
.sep.wide { margin: 0 3px; }
.sep.thin { background: #777; }

.combo { display: flex; align-items: center; height: 18px; border: 1px solid #aaa; border-bottom-color: #888; background: #f0f0f0; color: #6a6a6a; overflow: hidden; font-family: Roboto, sans-serif; }
.combo select { appearance: none; flex: 1; min-width: 0; height: 16px; padding-left: 3px; }
.combo > svg:last-child { width: 12px; height: 16px; padding: 3px 1px; background: #fff; pointer-events: none; }
.combo .strip { width: 64px; height: 14px; margin-left: 2px; }
.inset { padding-left: 6px; }
.w79 { width: 79px; }
.w96 { width: 96px; }
.w98 { width: 98px; }
.w120 { width: 120px; }
.w126 { width: 126px; }
.w139 { width: 139px; }
.w239 { width: 239px; }
.swatch { width: 8px; height: 8px; margin-left: 4px; background: #ff0; border: 1px solid #222; }
.line { height: 1px; margin-left: 3px; background: #222; }
.l48 { width: 48px; }
.l28 { width: 28px; }

.work { display: flex; flex: 1; min-height: 541px; }
.side { width: 20px; border-top: 1px solid #aaa; }
.side.right { width: 22px; padding-left: 1px; }
.vbar { display: flex; flex-direction: column; align-items: center; background: #f4f4f4; border-bottom: 1px solid #aaa; border-right: 1px solid #ccc; }
.vbar button { flex: 1; width: 18px; min-height: 0; }
.vbar svg { width: 15px; height: 15px; }
.draw { height: 346px; padding-bottom: 4px; }
.modify { height: 311px; padding-bottom: 3px; }
.order { height: 85px; padding: 3px 0 4px; }
.hgrip { width: 16px; height: 5px; margin: 1px 0; border: solid #bbb; border-width: 1px 0; background: #fff; }

.drawing { display: flex; flex: 1; flex-direction: column; min-width: 0; border-left: 2px solid #999; border-top: 1px solid #777; }
.canvas { position: relative; flex: 1; background: #000; overflow: hidden; }
.plan { position: absolute; inset: 0; width: 100%; height: 100%; }
.dyn { position: absolute; left: 348px; top: 413px; display: flex; gap: 2px; }
.tip, .px, .py { height: 16px; line-height: 14px; border: 1px solid #a9a4d0; background: #1c1560; color: #e3e0f4; }
.tip { width: 88px; padding-left: 4px; white-space: nowrap; }
.px { width: 42px; border: solid #fff; border-width: 2px 5px 2px 3px; background: #0a74cf; color: #fff; line-height: 12px; }
.py { width: 38px; padding-left: 4px; }

.tabs { display: flex; align-items: center; height: 14px; background: #f0f0f0; }
.nav { width: 15px; height: 13px; background: #fafafa; border-right: 1px solid #ccc; }
.nav svg { width: 14px; height: 12px; }
.tab { height: 12px; padding: 0 1px; background: #fff; font-family: Roboto, sans-serif; }
.tab.active { width: 38px; background: #000; color: #fff; clip-path: polygon(0 0, 100% 0, 90% 100%, 14% 100%); }
.slash { width: 6px; height: 12px; }

.divider { height: 10px; border-top: 3px solid #f8f8f8; background: linear-gradient(#858585 2px, #f0f0f0 2px); }
.command { display: flex; height: 39px; padding: 2px 6px 1px; border-bottom: 1px solid #b0b0b0; }
.cgrip { width: 5px; height: 32px; margin-right: 2px; border: solid #b4b4b4; border-width: 0 1px; background: #fff; }
.cmdbox { display: flex; flex: 1; flex-direction: column; min-width: 0; border-top: 1px solid #666; border-left: 1px solid #777; background: #fff; font-family: "Liberation Mono", monospace; font-size: 11px; }
.history { display: flex; height: 19px; border-bottom: 1px solid #999; }
.history output { line-height: 15px; }
.vscroll { display: flex; flex-direction: column; margin-left: auto; width: 14px; background: #f0f0f0; }
.vscroll button { flex: 1; }
.vscroll svg { width: 10px; height: 8px; }
.prompt { display: flex; align-items: center; flex: 1; }
.prompt label { white-space: nowrap; }
.prompt input { flex: 1; min-width: 0; outline: 0; }
.hscroll { display: flex; width: 68px; height: 14px; background: #f0f0f0; }
.hscroll button { width: 14px; }
.hscroll svg { width: 8px; height: 10px; }
.thumb { width: 14px; margin-right: 12px; background: #cdcdcd; }

.status { display: flex; align-items: center; height: 18px; gap: 3px; padding: 2px 3px 0 4px; font-family: "Noto Sans", sans-serif; }
.coords { width: 111px; height: 15px; line-height: 14px; border: 1px solid #ccc; border-top-color: #888; white-space: nowrap; }
.status button { height: 15px; padding: 0 1px; border: solid #aaa; border-width: 0 1px 1px 0; color: #111; }
.status .on { border: solid #222; border-width: 1px 0 0 2px; background: #f6f6f6; }
.tray { margin-left: auto; border: 1px solid #bbb; }
.tray svg { width: 50px; height: 14px; }
.status .flat { border: 0; padding: 0; }
.flat svg { width: 13px; height: 13px; }

.taskbar { display: flex; height: 32px; background: linear-gradient(90deg, #21363e, #203640 60%, #1b2b44 85%, #1b2940); color: #fff; font-family: "Noto Sans", "DejaVu Sans", sans-serif; font-size: 10px; }
.start { width: 38px; }
.start svg { width: 14px; height: 14px; }
.search { display: flex; align-items: center; width: 231px; gap: 8px; padding-left: 11px; background: #f2f2f2; border-bottom: 1px solid #bbb; }
.search svg { width: 14px; height: 14px; }
.search input { flex: 1; min-width: 0; font-size: 11px; color: #444; }
.search input::placeholder { color: #444; opacity: 1; }
.app-btn { width: 39px; height: 32px; position: relative; }
.app-btn svg { width: 20px; height: 20px; }
.app-btn.current { background: #4a5e68; }
.app-btn.open::after { content: ""; position: absolute; bottom: 0; left: 4px; right: 4px; height: 2px; background: #6fb0ea; }
.app-btn.current::after { left: 0; right: 0; }
.tile { width: 17px; height: 17px; font-size: 9px; line-height: 16px; font-weight: 700; }
.ai { background: #d5700b; color: #ffd58a; }
.ps { background: #0a5aa8; color: #9ed6ff; }
.systray { display: flex; margin-left: auto; align-items: center; }
.systray button { width: 19px; height: 32px; }
.systray svg { width: 14px; height: 14px; }
.systray .big { width: 26px; }
.systray .big svg { width: 19px; height: 19px; }
.systray .news { width: 76px; gap: 5px; }
.news svg { width: 18px; height: 20px; }
.systray .lang { width: 30px; }
.systray .clock { width: 50px; flex-direction: column; font-size: 9px; line-height: 13px; }
.clock .date { font-size: 8px; }
.systray .notif { position: relative; width: 40px; }
.systray .notif svg { width: 22px; height: 20px; }
.badge { position: absolute; left: 20px; top: 16px; width: 12px; height: 12px; border: 1px solid #aaa; border-radius: 50%; background: #39434f; font-size: 9px; line-height: 10px; text-align: center; }
.peek { width: 1px; height: 32px; margin: 0 2px 0 1px; background: #6b7584; }
```
